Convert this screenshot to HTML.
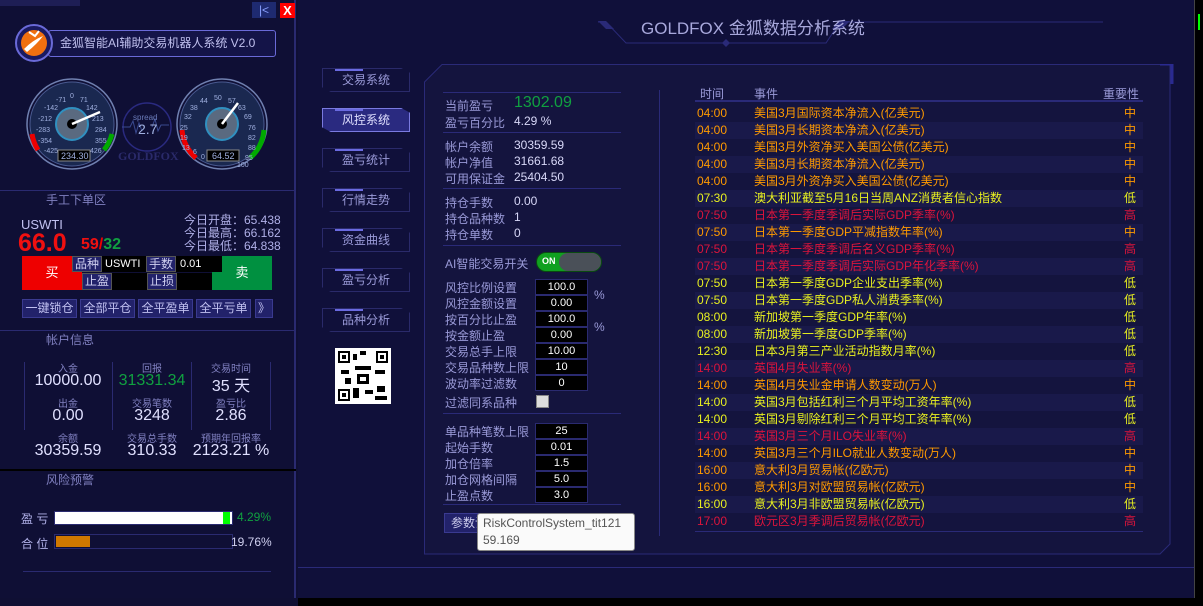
<!DOCTYPE html>
<html><head><meta charset="utf-8"><style>
*{margin:0;padding:0;box-sizing:border-box}
body{width:1203px;height:606px;overflow:hidden;background:#0f0f33;font-family:"Liberation Sans","Noto Sans CJK SC",sans-serif;position:relative;color:#b8b8e8}
.a{position:absolute;white-space:nowrap}
.sec{position:absolute;left:0;width:296px;height:16px;border-top:1px solid #2a2a70}
.sec span{position:absolute;left:46px;top:0;font-size:12px;color:#8080c0}
.nav{position:absolute;left:322px;width:88px;height:24px;border:1px solid #2a2a6a;font-size:12px;color:#9a9ad8;text-align:center;line-height:22px;clip-path:polygon(0 0,90% 0,100% 20%,100% 100%,10% 100%,0 80%)}
.nav:before{content:"";position:absolute;left:12px;top:0;width:28px;height:2px;background:#6a6ae0}
.lb{position:absolute;left:445px;font-size:12px;color:#9a9ad8}
.vl{position:absolute;left:514px;font-size:12px;color:#d8d8f8}
.in{position:absolute;left:535px;width:53px;height:16px;background:#000;border:1px solid #2a2a70;color:#fff;font-size:11px;text-align:center;line-height:14px}
.hl{position:absolute;left:443px;width:178px;height:1px;background:#2a2a78}
.row{position:absolute;left:695px;width:448px;height:17px;font-size:12px;line-height:17px}
.row:nth-child(even){background:#19194a}
.row b{font-weight:normal;position:absolute}
.row .t{left:2px}.row .e{left:59px}.row .i{left:429px}
.O{color:#ff9a00}.Y{color:#e8f020}.R{color:#dc143c}
.btn{position:absolute;top:299px;height:19px;background:#22226a;border:1px solid #3a3a90;font-size:12px;color:#c0c0f0;text-align:center;line-height:17px}
.cl{position:absolute;font-size:10px;color:#8080c0;text-align:center;width:80px}
.cv{position:absolute;font-size:16px;color:#e0e0ff;text-align:center;width:90px}
</style></head><body>
<div class="a" style="left:0;top:0;width:296px;height:598px;background:#0f0f35;border-right:2px solid #2a2a70"></div>
<div class="a" style="left:0;top:0;width:80px;height:6px;background:#1e1e55"></div>
<div class="a" style="left:252px;top:2px;width:24px;height:16px;background:#1e2a70;color:#8aa0ff;font-size:12px;text-align:center;line-height:16px">|&lt;</div>
<div class="a" style="left:280px;top:3px;width:15px;height:15px;background:#f00;color:#fff;font-size:13px;font-weight:bold;text-align:center;line-height:15px">X</div>
<div class="a" style="left:48px;top:30px;width:228px;height:27px;border:1px solid #6a6ad8;border-radius:3px;background:#141448;color:#c0c0ee;font-size:12px;line-height:25px;padding-left:11px;overflow:hidden">金狐智能AI辅助交易机器人系统 V2.0</div>
<svg class="a" style="left:15px;top:22px" width="38" height="42"><circle cx="19" cy="21" r="18" fill="#1a1a60" stroke="#6a6ad8" stroke-width="2"/><circle cx="19" cy="21" r="13" fill="#f07010"/><path d="M9 27 Q18 18 28 14 Q22 22 12 30Z" fill="#fff"/><path d="M14 10 L20 14 L24 9" stroke="#fff" stroke-width="2" fill="none"/></svg>
<svg class="a" style="left:0;top:70px" width="296" height="110">
<g fill="none"><circle cx="72" cy="54" r="45" stroke="#7080b0" stroke-width="1.5"/><circle cx="72" cy="54" r="42" fill="#1a2850" stroke="#4a5a90"/><circle cx="72" cy="54" r="16" fill="#5a6a80" stroke="#3090c0" stroke-width="2"/><circle cx="72" cy="54" r="5" fill="#000"/>
<path d="M72 54 L100 42" stroke="#fff" stroke-width="2.5"/>
<path d="M38 80 A42 42 0 0 1 32 64" stroke="#e00" stroke-width="5"/><path d="M112 64 A42 42 0 0 1 104 80" stroke="#0a0" stroke-width="5"/>
<circle cx="222" cy="54" r="45" stroke="#7080b0" stroke-width="1.5"/><circle cx="222" cy="54" r="42" fill="#1a2850" stroke="#4a5a90"/><circle cx="222" cy="54" r="16" fill="#5a6a80" stroke="#3090c0" stroke-width="2"/><circle cx="222" cy="54" r="5" fill="#000"/>
<path d="M222 54 L238 33" stroke="#fff" stroke-width="2.5"/>
<path d="M196 88 A42 42 0 0 1 182 60" stroke="#e00" stroke-width="5"/><path d="M264 60 A42 42 0 0 1 250 88" stroke="#0a0" stroke-width="5"/>
<circle cx="147" cy="57" r="24" stroke="#2a2a80" stroke-width="1.5"/>
<path d="M122 57 h8 l3 -6 l3 12 l3 -10 l3 8 M152 57 l3 -8 l3 12 l3 -6 h8" stroke="#3a4a90"/></g>
<g font-size="7" fill="#a0b0e0" font-family="Liberation Sans">
<text x="70" y="28">0</text><text x="56" y="32">-71</text><text x="80" y="32">71</text><text x="44" y="40">-142</text><text x="86" y="40">142</text><text x="38" y="51">-212</text><text x="92" y="51">213</text><text x="36" y="62">-283</text><text x="95" y="62">284</text><text x="38" y="73">-354</text><text x="95" y="73">355</text><text x="44" y="83">-425</text><text x="90" y="83">426</text>
<text x="214" y="30">50</text><text x="200" y="33">44</text><text x="228" y="33">57</text><text x="190" y="40">38</text><text x="238" y="40">63</text><text x="184" y="49">32</text><text x="244" y="49">69</text><text x="180" y="60">25</text><text x="248" y="60">76</text><text x="180" y="70">19</text><text x="248" y="70">82</text><text x="182" y="80">13</text><text x="248" y="80">88</text><text x="193" y="84">6</text><text x="245" y="90">95</text><text x="201" y="89">0</text><text x="237" y="97">100</text>
<text x="133" y="50" fill="#6a7ab8" font-size="8">spread</text></g>
<text x="138" y="64" font-size="14" fill="#a0b0e0" font-family="Liberation Sans">2.7</text>
<text x="118" y="90" font-size="12" font-weight="bold" fill="#2a2a6a" font-family="Liberation Serif">GOLDFOX</text>
<rect x="58" y="80" width="32" height="11" fill="#000" stroke="#888"/><text x="61" y="89" font-size="9" fill="#a0b0e0" font-family="Liberation Sans">234.30</text>
<rect x="207" y="80" width="32" height="11" fill="#000" stroke="#888"/><text x="212" y="89" font-size="9" fill="#a0b0e0" font-family="Liberation Sans">64.52</text>
</svg>
<div class="sec" style="top:190px"><span>手工下单区</span></div>
<div class="a" style="left:21px;top:217px;font-size:13px;color:#c0c0f0">USWTI</div>
<div class="a" style="left:18px;top:229px;font-size:25px;font-weight:bold;color:#f01010">66.0</div>
<div class="a" style="left:81px;top:236px;font-size:16px;font-weight:bold;color:#f01010">59<span style="color:#e00">/</span><span style="color:#10a040">32</span></div>
<div class="a" style="left:184px;top:214px;font-size:12px;line-height:13px;color:#b0b0e8">今日开盘：65.438<br>今日最高：66.162<br>今日最低：64.838</div>
<div class="a" style="left:22px;top:256px;width:60px;height:34px;background:#ee0000;color:#fff;font-size:13px;text-align:center;line-height:34px">买</div>
<div class="a" style="left:212px;top:256px;width:60px;height:34px;background:#009040;color:#fff;font-size:13px;text-align:center;line-height:34px">卖</div>
<div class="a" style="left:72px;top:256px;width:30px;height:16px;background:#22226a;border:1px solid #555;font-size:12px;color:#d0d0f0;line-height:14px;text-align:center">品种</div>
<div class="a" style="left:102px;top:256px;width:44px;height:16px;background:#000;font-size:11px;color:#fff;line-height:16px;padding-left:3px">USWTI</div>
<div class="a" style="left:146px;top:256px;width:30px;height:16px;background:#22226a;border:1px solid #555;font-size:12px;color:#d0d0f0;line-height:14px;text-align:center">手数</div>
<div class="a" style="left:176px;top:256px;width:46px;height:16px;background:#000;font-size:11px;color:#fff;line-height:16px;padding-left:4px">0.01</div>
<div class="a" style="left:82px;top:273px;width:30px;height:17px;background:#22226a;border:1px solid #555;font-size:12px;color:#d0d0f0;line-height:15px;text-align:center">止盈</div>
<div class="a" style="left:112px;top:273px;width:35px;height:17px;background:#000"></div>
<div class="a" style="left:147px;top:273px;width:30px;height:17px;background:#22226a;border:1px solid #555;font-size:12px;color:#d0d0f0;line-height:15px;text-align:center">止损</div>
<div class="a" style="left:177px;top:273px;width:35px;height:17px;background:#000"></div>
<div class="btn" style="left:22px;width:55px">一键锁仓</div><div class="btn" style="left:80px;width:55px">全部平仓</div><div class="btn" style="left:138px;width:55px">全平盈单</div><div class="btn" style="left:196px;width:55px">全平亏单</div><div class="btn" style="left:255px;width:18px">》</div>
<div class="sec" style="top:330px"><span>帐户信息</span></div>
<div class="a" style="left:24px;top:362px;width:1px;height:68px;background:#2a2a70"></div><div class="a" style="left:112px;top:362px;width:1px;height:68px;background:#2a2a70"></div><div class="a" style="left:191px;top:362px;width:1px;height:68px;background:#2a2a70"></div><div class="a" style="left:270px;top:362px;width:1px;height:68px;background:#2a2a70"></div>
<div class="cl" style="left:28px;top:360px">入金</div><div class="cv" style="left:23px;top:372px">10000.00</div>
<div class="cl" style="left:112px;top:360px">回报</div><div class="cv" style="left:107px;top:372px;color:#10a040">31331.34</div>
<div class="cl" style="left:191px;top:360px">交易时间</div><div class="cv" style="left:186px;top:372px">35 天</div>
<div class="cl" style="left:28px;top:395px">出金</div><div class="cv" style="left:23px;top:407px">0.00</div>
<div class="cl" style="left:112px;top:395px">交易笔数</div><div class="cv" style="left:107px;top:407px">3248</div>
<div class="cl" style="left:191px;top:395px">盈亏比</div><div class="cv" style="left:186px;top:407px">2.86</div>
<div class="cl" style="left:28px;top:430px">余额</div><div class="cv" style="left:23px;top:442px">30359.59</div>
<div class="cl" style="left:112px;top:430px">交易总手数</div><div class="cv" style="left:107px;top:442px">310.33</div>
<div class="cl" style="left:191px;top:430px">预期年回报率</div><div class="cv" style="left:186px;top:442px">2123.21 %</div>
<div class="sec" style="top:469px;border-top:2px solid #000"><span>风险预警</span></div>
<div class="a" style="left:21px;top:510px;font-size:12px;color:#b0b0e8">盈 亏</div>
<div class="a" style="left:54px;top:511px;width:179px;height:14px;border:1px solid #2a2a70;background:#fff"><div style="position:absolute;right:2px;top:0;width:7px;height:12px;background:#0f0"></div></div>
<div class="a" style="left:237px;top:510px;font-size:12px;color:#10a040">4.29%</div>
<div class="a" style="left:21px;top:535px;font-size:12px;color:#b0b0e8">合 位</div>
<div class="a" style="left:54px;top:534px;width:179px;height:15px;border:1px solid #2a2a70"><div style="position:absolute;left:1px;top:1px;width:34px;height:11px;background:#d07800"></div></div>
<div class="a" style="left:231px;top:535px;font-size:12px;color:#d0d0f0">19.76%</div>
<div class="a" style="left:23px;top:571px;width:248px;height:1px;background:#2a2a70"></div>
<div class="a" style="left:298px;top:0;width:896px;height:598px;background:#10103a"></div>
<svg class="a" style="left:598px;top:18px" width="520" height="30"><path d="M0 4 H8 L28 25 H228 L242 4 H505" stroke="#2a2a78" fill="none"/><path d="M0 3 h8 l8 8 h-8z M242 3 h10 l-8 8 h-10z" fill="#2a2a78"/><path d="M128 21 l4 4 -4 4 -4 -4z" fill="#2a2a78"/></svg>
<div class="a" style="left:641px;top:14px;font-size:17px;color:#a8a8dc">GOLDFOX 金狐数据分析系统</div>
<div class="a" style="left:298px;top:567px;width:896px;height:1px;background:#2a2a78"></div>
<div class="a" style="left:298px;top:598px;width:905px;height:8px;background:#000"></div>
<div class="a" style="left:1194px;top:0;width:9px;height:598px;background:#000;border-left:1px solid #444"></div>
<div class="a" style="left:1198px;top:14px;width:2px;height:16px;background:#0f0"></div>
<div class="nav" style="top:68px">交易系统</div>
<div class="nav" style="top:108px;background:#2a2a80;border-color:#7a7ae0;color:#e0e0ff">风控系统</div>
<div class="nav" style="top:148px">盈亏统计</div>
<div class="nav" style="top:188px">行情走势</div>
<div class="nav" style="top:228px">资金曲线</div>
<div class="nav" style="top:268px">盈亏分析</div>
<div class="nav" style="top:308px">品种分析</div>
<svg class="a" style="left:335px;top:348px" width="56" height="56"><rect width="56" height="56" fill="#fff"/><g fill="#000"><rect x="3" y="3" width="12" height="12"/><rect x="41" y="3" width="12" height="12"/><rect x="3" y="41" width="12" height="12"/><rect x="18" y="6" width="4" height="6"/><rect x="25" y="3" width="6" height="4"/><rect x="20" y="18" width="16" height="4"/><rect x="6" y="22" width="8" height="4"/><rect x="40" y="22" width="10" height="4"/><rect x="22" y="26" width="12" height="10"/><rect x="18" y="40" width="6" height="10"/><rect x="30" y="42" width="8" height="4"/><rect x="42" y="38" width="8" height="6"/><rect x="40" y="48" width="12" height="4"/><rect x="10" y="30" width="6" height="6"/></g><g fill="#fff"><rect x="5" y="5" width="8" height="8"/><rect x="43" y="5" width="8" height="8"/><rect x="5" y="43" width="8" height="8"/><rect x="25" y="29" width="6" height="4"/></g><g fill="#000"><rect x="7" y="7" width="4" height="4"/><rect x="45" y="7" width="4" height="4"/><rect x="7" y="45" width="4" height="4"/></g></svg>
<svg class="a" style="left:424px;top:64px" width="750" height="504"><path d="M18 0.5 H746 V480 L736 490 H0.5 V18Z" fill="#14143e" stroke="#2a2a78"/><path d="M736 0 h12 v20" stroke="#2a2a90" stroke-width="3" fill="none"/></svg>
<div class="a" style="left:659px;top:90px;width:1px;height:446px;background:#2a2a78"></div>
<div class="hl" style="top:92px"></div>
<div class="lb" style="top:97px">当前盈亏</div><div class="a" style="left:514px;top:94px;font-size:16px;color:#10a040">1302.09</div>
<div class="lb" style="top:114px">盈亏百分比</div><div class="vl" style="top:114px">4.29 %</div>
<div class="hl" style="top:132px"></div>
<div class="lb" style="top:138px">帐户余额</div><div class="vl" style="top:138px">30359.59</div>
<div class="lb" style="top:154px">帐户净值</div><div class="vl" style="top:154px">31661.68</div>
<div class="lb" style="top:170px">可用保证金</div><div class="vl" style="top:170px">25404.50</div>
<div class="hl" style="top:188px"></div>
<div class="lb" style="top:194px">持仓手数</div><div class="vl" style="top:194px">0.00</div>
<div class="lb" style="top:210px">持仓品种数</div><div class="vl" style="top:210px">1</div>
<div class="lb" style="top:226px">持仓单数</div><div class="vl" style="top:226px">0</div>
<div class="hl" style="top:245px"></div>
<div class="lb" style="top:255px">AI智能交易开关</div>
<div class="a" style="left:536px;top:252px;width:66px;height:20px;border-radius:10px;background:#10a020;border:1px solid #0a4a10"><span style="position:absolute;left:5px;top:3px;font-size:9px;font-weight:bold;color:#fff">ON</span><div style="position:absolute;left:22px;top:0;width:42px;height:18px;border-radius:9px;background:#4a5058"></div></div>
<div class="lb" style="top:279px">风控比例设置</div><div class="in" style="top:279px">100.0</div>
<div class="lb" style="top:295px">风控金额设置</div><div class="in" style="top:295px">0.00</div>
<div class="lb" style="top:311px">按百分比止盈</div><div class="in" style="top:311px">100.0</div>
<div class="lb" style="top:327px">按金额止盈</div><div class="in" style="top:327px">0.00</div>
<div class="lb" style="top:343px">交易总手上限</div><div class="in" style="top:343px">10.00</div>
<div class="lb" style="top:359px">交易品种数上限</div><div class="in" style="top:359px">10</div>
<div class="lb" style="top:375px">波动率过滤数</div><div class="in" style="top:375px">0</div>
<div class="a" style="left:594px;top:288px;font-size:12px;color:#9a9ad8">%</div><div class="a" style="left:594px;top:320px;font-size:12px;color:#9a9ad8">%</div>
<div class="lb" style="top:394px">过滤同系品种</div><div class="a" style="left:536px;top:395px;width:13px;height:13px;background:#ddd;border:1px solid #888"></div>
<div class="hl" style="top:413px"></div>
<div class="lb" style="top:423px">单品种笔数上限</div><div class="in" style="top:423px">25</div>
<div class="lb" style="top:439px">起始手数</div><div class="in" style="top:439px">0.01</div>
<div class="lb" style="top:455px">加仓倍率</div><div class="in" style="top:455px">1.5</div>
<div class="lb" style="top:471px">加仓网格间隔</div><div class="in" style="top:471px">5.0</div>
<div class="lb" style="top:487px">止盈点数</div><div class="in" style="top:487px">3.0</div>
<div class="hl" style="top:504px"></div>
<div class="a" style="left:444px;top:513px;width:80px;height:20px;background:#22226a;border:1px solid #3a3a90;font-size:12px;color:#d0d0f0;line-height:18px;padding-left:6px">参数设置</div>
<div class="a" style="left:477px;top:513px;width:158px;height:38px;background:#fafafa;border:1px solid #888;border-radius:3px;font-size:12px;color:#555;line-height:17px;padding:1px 5px">RiskControlSystem_tit121<br>59.169</div>
<div class="a" style="left:700px;top:85px;font-size:12px;color:#9a9ad8">时间</div>
<div class="a" style="left:754px;top:85px;font-size:12px;color:#9a9ad8">事件</div>
<div class="a" style="left:1103px;top:85px;font-size:12px;color:#9a9ad8">重要性</div>
<div class="a" style="left:695px;top:100px;width:448px;height:2px;background:#2a2a78"></div>
<div class="a" style="left:695px;top:531px;width:448px;height:1px;background:#2a2a78"></div>
<div class="a" style="left:0;top:105px">
<div class="row O"><b class="t">04:00</b><b class="e">美国3月国际资本净流入(亿美元)</b><b class="i">中</b></div>
<div class="row O" style="top:17px"><b class="t">04:00</b><b class="e">美国3月长期资本净流入(亿美元)</b><b class="i">中</b></div>
<div class="row O" style="top:34px"><b class="t">04:00</b><b class="e">美国3月外资净买入美国公债(亿美元)</b><b class="i">中</b></div>
<div class="row O" style="top:51px"><b class="t">04:00</b><b class="e">美国3月长期资本净流入(亿美元)</b><b class="i">中</b></div>
<div class="row O" style="top:68px"><b class="t">04:00</b><b class="e">美国3月外资净买入美国公债(亿美元)</b><b class="i">中</b></div>
<div class="row Y" style="top:85px"><b class="t">07:30</b><b class="e">澳大利亚截至5月16日当周ANZ消费者信心指数</b><b class="i">低</b></div>
<div class="row R" style="top:102px"><b class="t">07:50</b><b class="e">日本第一季度季调后实际GDP季率(%)</b><b class="i">高</b></div>
<div class="row O" style="top:119px"><b class="t">07:50</b><b class="e">日本第一季度GDP平减指数年率(%)</b><b class="i">中</b></div>
<div class="row R" style="top:136px"><b class="t">07:50</b><b class="e">日本第一季度季调后名义GDP季率(%)</b><b class="i">高</b></div>
<div class="row R" style="top:153px"><b class="t">07:50</b><b class="e">日本第一季度季调后实际GDP年化季率(%)</b><b class="i">高</b></div>
<div class="row Y" style="top:170px"><b class="t">07:50</b><b class="e">日本第一季度GDP企业支出季率(%)</b><b class="i">低</b></div>
<div class="row Y" style="top:187px"><b class="t">07:50</b><b class="e">日本第一季度GDP私人消费季率(%)</b><b class="i">低</b></div>
<div class="row Y" style="top:204px"><b class="t">08:00</b><b class="e">新加坡第一季度GDP年率(%)</b><b class="i">低</b></div>
<div class="row Y" style="top:221px"><b class="t">08:00</b><b class="e">新加坡第一季度GDP季率(%)</b><b class="i">低</b></div>
<div class="row Y" style="top:238px"><b class="t">12:30</b><b class="e">日本3月第三产业活动指数月率(%)</b><b class="i">低</b></div>
<div class="row R" style="top:255px"><b class="t">14:00</b><b class="e">英国4月失业率(%)</b><b class="i">高</b></div>
<div class="row O" style="top:272px"><b class="t">14:00</b><b class="e">英国4月失业金申请人数变动(万人)</b><b class="i">中</b></div>
<div class="row Y" style="top:289px"><b class="t">14:00</b><b class="e">英国3月包括红利三个月平均工资年率(%)</b><b class="i">低</b></div>
<div class="row Y" style="top:306px"><b class="t">14:00</b><b class="e">英国3月剔除红利三个月平均工资年率(%)</b><b class="i">低</b></div>
<div class="row R" style="top:323px"><b class="t">14:00</b><b class="e">英国3月三个月ILO失业率(%)</b><b class="i">高</b></div>
<div class="row O" style="top:340px"><b class="t">14:00</b><b class="e">英国3月三个月ILO就业人数变动(万人)</b><b class="i">中</b></div>
<div class="row O" style="top:357px"><b class="t">16:00</b><b class="e">意大利3月贸易帐(亿欧元)</b><b class="i">中</b></div>
<div class="row O" style="top:374px"><b class="t">16:00</b><b class="e">意大利3月对欧盟贸易帐(亿欧元)</b><b class="i">中</b></div>
<div class="row Y" style="top:391px"><b class="t">16:00</b><b class="e">意大利3月非欧盟贸易帐(亿欧元)</b><b class="i">低</b></div>
<div class="row R" style="top:408px"><b class="t">17:00</b><b class="e">欧元区3月季调后贸易帐(亿欧元)</b><b class="i">高</b></div>
</div>
</body></html>
